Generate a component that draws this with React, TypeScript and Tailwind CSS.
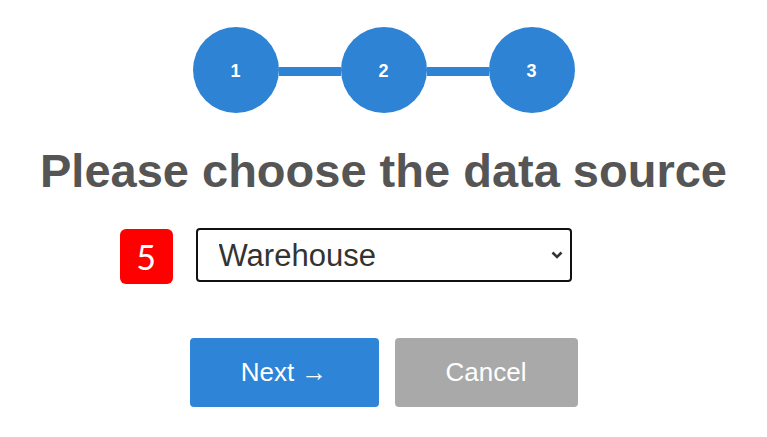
import React, { useState } from "react";

const steps = ["1", "2", "3"];

const App = () => {
  const [source, setSource] = useState("Warehouse");

  return (
    <div
      className="w-[767px] h-[437px] bg-white flex flex-col items-center pt-[27px]"
      style={{ fontFamily: '"Liberation Sans", Arial, sans-serif' }}
    >
      {/* stepper */}
      <div className="flex items-center">
        {steps.map((s, i) => (
          <React.Fragment key={s}>
            {i > 0 && <div className="w-[62px] h-[9px] bg-[#2e83d5] mt-[3px]"></div>}
            <div className="w-[86px] h-[86px] rounded-full bg-[#2e83d5] flex items-center justify-center text-white font-bold text-[18px] leading-none pt-[2px]">
              {s}
            </div>
          </React.Fragment>
        ))}
      </div>

      <h1 className="mt-[34px] text-[47px] leading-none font-bold text-[#555555]">
        Please choose the data source
      </h1>

      <div className="relative mt-[34px]">
        <div
          className="absolute right-full mr-[23px] top-[1px] w-[53px] h-[55px] rounded-[6px] bg-[#ff0000] text-white flex items-center justify-center text-[34px] leading-none"
          style={{ fontFamily: "Lato, sans-serif" }}
        >
          5
        </div>
        <select
          value={source}
          onChange={(e) => setSource(e.target.value)}
          className="appearance-none w-[376px] h-[54px] border-2 border-[#111111] rounded-[4px] bg-white pl-[21px] pt-[2px] text-[31px] text-[#333333] outline-none"
        >
          <option>Warehouse</option>
          <option>Data Lake</option>
          <option>CSV File</option>
        </select>
        <svg
          className="absolute right-[9px] top-[23px] pointer-events-none"
          width="12"
          height="8"
          viewBox="0 0 12 8"
        >
          <path d="M1.5 1.5 L6 6 L10.5 1.5" fill="none" stroke="#333" strokeWidth="2.6" />
        </svg>
      </div>

      <div className="flex gap-[16px] mt-[56px]">
        <button className="w-[189px] h-[69px] rounded-[4px] bg-[#2e84d6] text-white text-[26px]">
          Next →
        </button>
        <button className="w-[183px] h-[69px] rounded-[4px] bg-[#a9a9a9] text-white text-[26px]">
          Cancel
        </button>
      </div>
    </div>
  );
};

export default App;
